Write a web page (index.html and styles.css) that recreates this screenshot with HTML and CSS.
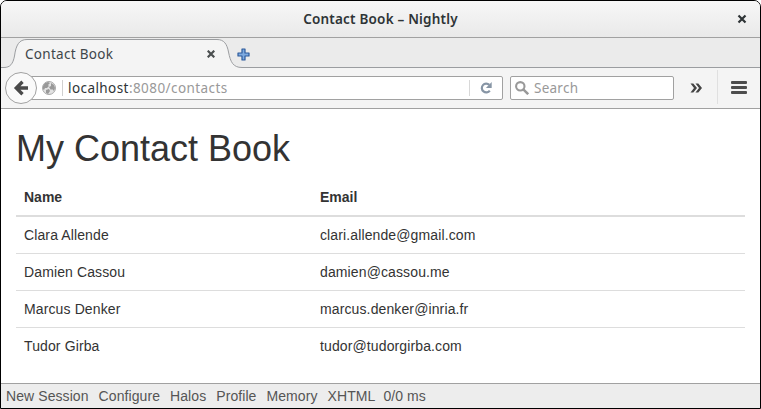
FILE: index.html
```html
<!DOCTYPE html>
<html lang="en">
<head>
<meta charset="utf-8">
<title>Contact Book</title>
<link rel="stylesheet" href="styles.css">
</head>
<body>
<div class="window">
  <header class="titlebar">
    <span class="title">Contact Book – Nightly</span>
    <svg class="window-close" width="10" height="10" viewBox="0 0 10 10"><path d="M1.500 1.500l7 7M8.500 1.500l-7 7" stroke="#2e3436" stroke-width="2.200"/></svg>
  </header>
  <div class="tabstrip">
    <svg class="tab-shape" width="759" height="30" viewBox="0 0 759 30"><path d="M0 29.500H3C9 29.500 12 26 13.500 18C15 7 18 1.500 26 1.500H216C223 1.500 226 6 227.500 14C229.500 24 232 29.500 241 29.500H759V31H0Z" fill="#f4f4f4"/><path d="M0 29.500H3C9 29.500 12 26 13.500 18C15 7 18 1.500 26 1.500H216C223 1.500 226 6 227.500 14C229.500 24 232 29.500 241 29.500H759" fill="none" stroke="#9b9da0"/></svg>
    <span class="tab-label">Contact Book</span>
    <svg class="tab-close" width="8" height="8" viewBox="0 0 8 8"><path d="M.7 .7l6.600 6.600M7.300 .7L.7 7.300" stroke="#4b4f50" stroke-width="2.200"/></svg>
    <svg class="new-tab" width="13" height="13" viewBox="0 0 13 13"><path d="M5 1h3v4h4v3H8v4H5V8H1V5h4z" fill="#7fabe0" stroke="#2c5a9c" stroke-width="1.200" stroke-linejoin="round"/></svg>
  </div>
  <div class="toolbar">
    <svg class="back" width="32" height="32" viewBox="0 0 32 32"><circle cx="16" cy="16" r="15.500" fill="#fafafa" stroke="#a1a1a1"/><path d="M11 16H23M17.500 9.800L11.300 16l6.200 6.200" fill="none" stroke="#4a4a4a" stroke-width="3.400"/></svg>
    <div class="address">
      <svg class="globe" width="14" height="14" viewBox="0 0 14 14"><circle cx="7" cy="7" r="6.500" fill="#e2e2e2" stroke="#aaa"/><path d="M1 5L3 2 6 1 8 2 6 4 7 5 5 7 3 7 2 9 1 8zM9 2L12 4 13 7 12 10 10 8 9 9 7 6 9 5zM4 9L7 8 8 10 6 13 4 12z" fill="#999"/></svg>
      <span class="url"><b>localhost</b>:8080/contacts</span>
      <svg class="reload" width="12" height="12" viewBox="0 0 12 12"><path d="M9.300 2.900A4.400 4.400 0 1 0 9.800 8.600" fill="none" stroke="#8795a5" stroke-width="2.200"/><path d="M11.700 0V6H5.900z" fill="#8795a5"/></svg>
    </div>
    <div class="search">
      <svg width="14" height="14" viewBox="0 0 14 14"><circle cx="5.300" cy="5.300" r="4.200" fill="none" stroke="#999" stroke-width="2.100"/><path d="M8.300 8.300L13.200 13.200" stroke="#999" stroke-width="2.500"/></svg>
      <span>Search</span>
    </div>
    <svg class="more" width="12" height="10" viewBox="0 0 12 10"><path d="M.5 .5h2.800L7 5 3.300 9.500H.5L4 5zM5.500 .5h2.800L12 5 8.300 9.500H5.500L9 5z" fill="#444"/></svg>
    <div class="menu"><i></i><i></i><i></i></div>
  </div>
  <main class="page">
    <h1>My Contact Book</h1>
    <table>
      <thead><tr><th class="name">Name</th><th>Email</th></tr></thead>
      <tbody>
        <tr><td>Clara Allende</td><td>clari.allende@gmail.com</td></tr>
        <tr><td>Damien Cassou</td><td>damien@cassou.me</td></tr>
        <tr><td>Marcus Denker</td><td>marcus.denker@inria.fr</td></tr>
        <tr><td>Tudor Girba</td><td>tudor@tudorgirba.com</td></tr>
      </tbody>
    </table>
  </main>
  <footer class="devbar">
    <span>New Session</span><span>Configure</span><span>Halos</span><span>Profile</span><span>Memory</span><span class="tight">XHTML</span><span>0/0 ms</span>
  </footer>
</div>
</body>
</html>
```

FILE: styles.css
```css
* { box-sizing: border-box; }
body { margin: 0; background: #fff; font-family: "Liberation Sans", Arial, sans-serif; }
svg { display: block; flex: none; }
.window {
  width: 761px; height: 409px;
  border: 1px solid #000; border-radius: 7px 7px 0 0;
  overflow: hidden;
  display: flex; flex-direction: column;
  background: #fff;
}
.titlebar, .tabstrip, .toolbar { font-family: "Noto Sans", "Open Sans", sans-serif; white-space: nowrap; flex: none; }
.titlebar {
  height: 37px;
  display: grid; grid-template-columns: 30px 1fr 30px; align-items: center;
  background: linear-gradient(#f7f7f7, #e9e9e9);
  border-bottom: 1px solid #a1a1a1;
}
.title { grid-column: 2; text-align: center; font-size: 13.500px; font-weight: 600; color: #2e3436; letter-spacing: .2px; }
.window-close { margin-left: 7px; }
.tabstrip { height: 30px; display: flex; align-items: center; position: relative; background: #ebebeb; }
.tab-shape { position: absolute; left: 0; top: 0; }
.tab-label, .tab-close, .new-tab { position: relative; top: 1px; }
.tab-label { width: 182px; margin-left: 24px; font-size: 13.500px; color: #40464a; letter-spacing: .3px; }
.new-tab { margin-left: 22px; }
.toolbar { height: 41px; display: flex; align-items: center; background: #f4f4f4; border-bottom: 1px solid #a1a1a1; padding-left: 4px; }
.back { position: relative; z-index: 1; }
.address, .search { height: 24px; background: #fff; border: 1px solid #a1a1a1; border-radius: 2px; display: flex; align-items: center; }
.address { width: 476px; margin-left: -10px; padding-left: 14px; }
.url { margin-left: 6px; padding-left: 5px; border-left: 1px solid #d0d0d0; height: 16px; line-height: 16px; font-size: 13.500px; color: #999; letter-spacing: .43px; flex: 1; }
.url b { font-weight: 400; color: #2e3436; }
.reload { margin-right: 10px; box-sizing: content-box; padding: 2px 0 2px 10px; border-left: 1px solid #d8d8d8; }
.search { width: 164px; margin-left: 7px; padding-left: 4px; font-size: 13.500px; color: #999; }
.search span { margin-left: 5px; letter-spacing: .25px; }
.more { margin-left: 16px; }
.menu { margin-left: 15px; height: 34px; padding-left: 13px; border-left: 1px solid #e0e0e0; display: flex; flex-direction: column; justify-content: center; gap: 2px; position: relative; top: -1px; }
.menu i { width: 16px; height: 3px; border-radius: 1px; background: #4d4d4d; }
.page { flex: 1; padding: 20px 15px 0; color: #333; }
h1 { margin: 0 0 10px; font-size: 36px; font-weight: 400; line-height: 39.600px; }
table { width: 729px; table-layout: fixed; border-spacing: 0; font-size: 14px; line-height: 20px; }
.name { width: 296px; }
th, td { padding: 8px; text-align: left; }
td { letter-spacing: .12px; }
th { border-bottom: 2px solid #ddd; }
tr + tr td { border-top: 1px solid #ddd; }
.devbar { flex: none; height: 25px; border-top: 1px solid #a1a1a1; background: #ededed; color: #555; padding-left: 5px; display: flex; align-items: center; gap: 10px; font-size: 14px; letter-spacing: .08px; white-space: nowrap; }
.tight { margin-right: -2px; }
```
